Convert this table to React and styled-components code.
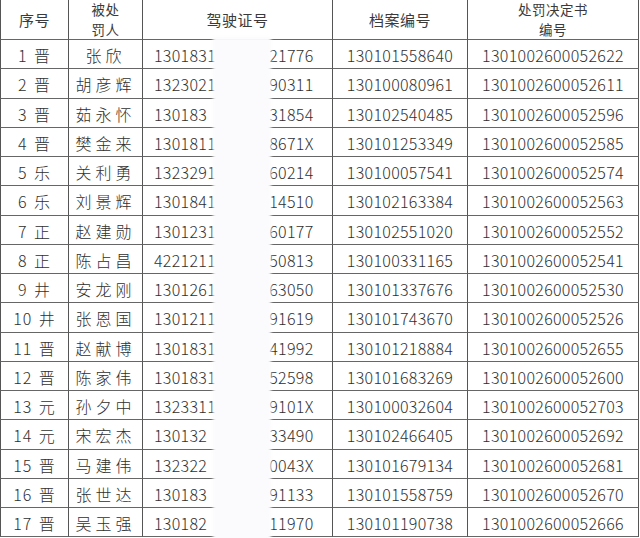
import React from 'react'
import { styled, createGlobalStyle } from 'styled-components'

const GlobalStyle = createGlobalStyle`
  html, body {
    margin: 0;
    padding: 0;
    background: #fff;
  }
  body {
    font-family: "Noto Sans CJK SC", "Noto Sans", sans-serif;
    color: #262626;
  }
`

const rows = [
  ['1 晋', '张欣', '1301831', '21776', '130101558640', '1301002600052622'],
  ['2 晋', '胡彦辉', '1323021', '90311', '130100080961', '1301002600052611'],
  ['3 晋', '茹永怀', '130183', '31854', '130102540485', '1301002600052596'],
  ['4 晋', '樊金来', '1301811', '8671X', '130101253349', '1301002600052585'],
  ['5 乐', '关利勇', '1323291', '60214', '130100057541', '1301002600052574'],
  ['6 乐', '刘景辉', '1301841', '14510', '130102163384', '1301002600052563'],
  ['7 正', '赵建勋', '1301231', '60177', '130102551020', '1301002600052552'],
  ['8 正', '陈占昌', '4221211', '50813', '130100331165', '1301002600052541'],
  ['9 井', '安龙刚', '1301261', '63050', '130101337676', '1301002600052530'],
  ['10 井', '张恩国', '1301211', '91619', '130101743670', '1301002600052526'],
  ['11 晋', '赵献博', '1301831', '41992', '130101218884', '1301002600052655'],
  ['12 晋', '陈家伟', '1301831', '52598', '130101683269', '1301002600052600'],
  ['13 元', '孙夕中', '1323311', '9101X', '130100032604', '1301002600052703'],
  ['14 元', '宋宏杰', '130132', '33490', '130102466405', '1301002600052692'],
  ['15 晋', '马建伟', '132322', '20043X', '130101679134', '1301002600052681'],
  ['16 晋', '张世达', '130183', '91133', '130101558759', '1301002600052670'],
  ['17 晋', '吴玉强', '130182', '11970', '130101190738', '1301002600052666'],
]

const App = () => {
  return (
    <>
      <GlobalStyle />
      <Sheet>
        <Grid>
          <HeadCell $first>序号</HeadCell>
          <HeadCell>
            <HeadLine>被处</HeadLine>
            <HeadLine>罚人</HeadLine>
          </HeadCell>
          <HeadCell>驾驶证号</HeadCell>
          <HeadCell>档案编号</HeadCell>
          <HeadCell>
            <HeadLine>处罚决定书</HeadLine>
            <HeadLine>编号</HeadLine>
          </HeadCell>

          {rows.map(([no, name, pre, post, file, decision], idx) => (
            <React.Fragment key={idx}>
              <Cell $first $spacing="1px">
                {no}
              </Cell>
              <Cell $spacing="4px">{name}</Cell>
              <Cell $left>
                {pre}
                <Masked>{'0'.repeat(18 - pre.length - post.length)}</Masked>
                {post}
              </Cell>
              <Cell>{file}</Cell>
              <Cell>{decision}</Cell>
            </React.Fragment>
          ))}
        </Grid>
        <Smudge />
      </Sheet>
    </>
  )
}

export default App

const Sheet = styled.div`
  position: relative;
  width: 640px;
  height: 538px;
  overflow: hidden;
`

const Grid = styled.div`
  display: grid;
  grid-template-columns: 69px 74px 190px 135px 171px;
  grid-template-rows: 40px repeat(17, 29.25px);
`

const Cell = styled.div`
  box-sizing: border-box;
  display: flex;
  align-items: center;
  justify-content: ${(p) => (p.$left ? 'flex-start' : 'center')};
  padding: ${(p) => (p.$left ? '2px 0 0 11px' : '2px 0 0 0')};
  border-right: 1.5px solid #555;
  border-bottom: 1.5px solid #666;
  border-left: ${(p) => (p.$first ? '1.5px solid #555' : 'none')};
  font-size: 16px;
  font-weight: 300;
  line-height: 1;
  letter-spacing: ${(p) => p.$spacing || '0.3px'};
  word-spacing: 2px;
  white-space: nowrap;
  color: #303030;
`

const HeadCell = styled(Cell)`
  flex-direction: column;
  padding: 0;
  font-size: 15px;
  font-weight: 400;
  letter-spacing: 0.5px;
  color: #3a3a3a;
`

const HeadLine = styled.span`
  display: block;
  font-size: 13.5px;
  line-height: 19.5px;
  height: 19.5px;
`

const Masked = styled.span`
  color: transparent;
`

const Smudge = styled.div`
  position: absolute;
  left: 213px;
  top: 37px;
  width: 58px;
  height: 510px;
  background: #fbfbfd;
  filter: blur(1.5px);
`
